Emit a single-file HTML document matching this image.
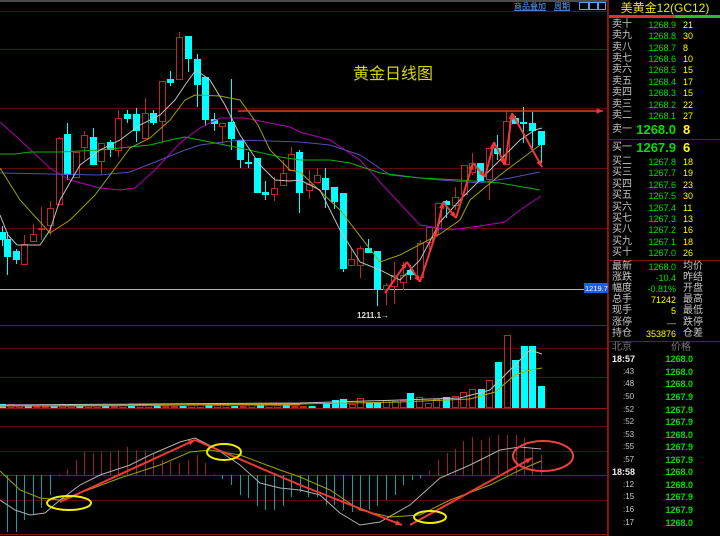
<!DOCTYPE html>
<html><head><meta charset="utf-8"><style>
html,body{margin:0;padding:0;background:#000;width:720px;height:536px;overflow:hidden;}
body{position:relative;font-family:"Liberation Sans","Noto Sans CJK SC",sans-serif;}
#rp{position:absolute;left:608px;top:0;width:112px;height:536px;border-left:1px solid #8a1010;box-sizing:border-box;}
.r{position:absolute;left:0;width:112px;height:12px;font-size:9px;line-height:12px;}
.l{position:absolute;left:3px;color:#c8c8c8;font-size:10px;}
.p{position:absolute;right:45px;color:#00e000;text-align:right;}
.q{position:absolute;left:74px;color:#ffff00;}
.l2{position:absolute;left:74px;color:#c8c8c8;font-size:10px;}
.hr{position:absolute;left:0;width:112px;height:1px;background:#8a1010;}
.t{position:absolute;left:3px;color:#c8c8c8;font-size:8px;}
.tp{position:absolute;right:28px;color:#00e000;font-weight:bold;}
</style></head><body>
<svg id="s" width="608" height="536" style="position:absolute;left:0;top:0" xmlns="http://www.w3.org/2000/svg">
<rect x="0" y="0" width="608" height="536" fill="#000"/>
<line x1="0" y1="1" x2="608" y2="1" stroke="#999" stroke-width="1"/>
<g stroke="#5a0a0a" stroke-width="1">
<line x1="0" y1="11.5" x2="608" y2="11.5"/><line x1="0" y1="49.5" x2="608" y2="49.5"/>
<line x1="0" y1="108.5" x2="608" y2="108.5"/><line x1="0" y1="168.5" x2="608" y2="168.5"/>
<line x1="0" y1="228.5" x2="608" y2="228.5"/>
<line x1="0" y1="348.5" x2="608" y2="348.5"/><line x1="0" y1="377.5" x2="608" y2="377.5"/>
<line x1="0" y1="426.5" x2="608" y2="426.5"/><line x1="0" y1="451.5" x2="608" y2="451.5"/>
<line x1="0" y1="500.5" x2="608" y2="500.5"/>
</g>
<g stroke="#8a1515" stroke-width="1">
<line x1="0" y1="325.5" x2="608" y2="325.5"/><line x1="0" y1="408.5" x2="608" y2="408.5"/>
<line x1="0" y1="475.5" x2="608" y2="475.5"/><line x1="0" y1="534.5" x2="608" y2="534.5"/>
<line x1="607.5" y1="0" x2="607.5" y2="536"/>
</g>
<line x1="0" y1="289.5" x2="608" y2="289.5" stroke="#b8b8b8" stroke-width="1"/>
<text x="514" y="9" font-size="8" fill="#5aa0ff" text-decoration="underline" font-family="Liberation Sans,Noto Sans CJK SC,sans-serif">商品叠加</text>
<text x="554" y="9" font-size="8" fill="#5aa0ff" text-decoration="underline" font-family="Liberation Sans,Noto Sans CJK SC,sans-serif">周期</text>
<rect x="579.5" y="2.5" width="9" height="7" fill="none" stroke="#5aa0ff"/><rect x="589.5" y="2.5" width="8" height="7" fill="none" stroke="#5aa0ff"/><rect x="598.5" y="2.5" width="7" height="7" fill="none" stroke="#5aa0ff"/>
<text x="353" y="79" font-size="16" fill="#d8d800" font-family="Liberation Sans,Noto Sans CJK SC,sans-serif">黄金日线图</text>
<g id="g"></g>
<rect x="584" y="283" width="24" height="10" fill="#1060ff"/>
<text x="585" y="291" font-size="7.5" fill="#fff" font-family="Liberation Sans,sans-serif">1219.7</text>
<text x="357" y="318" font-size="8" fill="#ddd" font-weight="bold" font-family="Liberation Sans,sans-serif">1211.1→</text>
</svg>
<div id="rp">
<div style="position:absolute;left:0;top:0;width:112px;height:16px;text-align:center;color:#e8e800;font-size:12px;line-height:16px;">美黄金12(GC12)</div>
<div style="position:absolute;left:0;top:15px;width:66px;height:3px;background:#e03030"></div>
<div style="position:absolute;left:66px;top:15px;width:46px;height:3px;background:#20c020"></div>
<div class="r" style="top:19px"><span class="l">卖十</span><span class="p">1268.9</span><span class="q">21</span></div>
<div class="r" style="top:30px"><span class="l">卖九</span><span class="p">1268.8</span><span class="q">30</span></div>
<div class="r" style="top:42px"><span class="l">卖八</span><span class="p">1268.7</span><span class="q">8</span></div>
<div class="r" style="top:53px"><span class="l">卖七</span><span class="p">1268.6</span><span class="q">10</span></div>
<div class="r" style="top:64px"><span class="l">卖六</span><span class="p">1268.5</span><span class="q">15</span></div>
<div class="r" style="top:76px"><span class="l">卖五</span><span class="p">1268.4</span><span class="q">17</span></div>
<div class="r" style="top:87px"><span class="l">卖四</span><span class="p">1268.3</span><span class="q">15</span></div>
<div class="r" style="top:99px"><span class="l">卖三</span><span class="p">1268.2</span><span class="q">22</span></div>
<div class="r" style="top:110px"><span class="l">卖二</span><span class="p">1268.1</span><span class="q">27</span></div>
<div class="r" style="top:122px;height:16px;line-height:16px"><span class="l">卖一</span><span class="p" style="font-size:13px;font-weight:bold">1268.0</span><span class="q" style="font-size:13px;font-weight:bold">8</span></div>
<div class="hr" style="top:139px"></div>
<div class="r" style="top:140px;height:16px;line-height:16px"><span class="l">买一</span><span class="p" style="font-size:13px;font-weight:bold">1267.9</span><span class="q" style="font-size:13px;font-weight:bold">6</span></div>
<div class="r" style="top:156px"><span class="l">买二</span><span class="p">1267.8</span><span class="q">18</span></div>
<div class="r" style="top:167px"><span class="l">买三</span><span class="p">1267.7</span><span class="q">19</span></div>
<div class="r" style="top:179px"><span class="l">买四</span><span class="p">1267.6</span><span class="q">23</span></div>
<div class="r" style="top:190px"><span class="l">买五</span><span class="p">1267.5</span><span class="q">30</span></div>
<div class="r" style="top:202px"><span class="l">买六</span><span class="p">1267.4</span><span class="q">11</span></div>
<div class="r" style="top:213px"><span class="l">买七</span><span class="p">1267.3</span><span class="q">13</span></div>
<div class="r" style="top:224px"><span class="l">买八</span><span class="p">1267.2</span><span class="q">16</span></div>
<div class="r" style="top:236px"><span class="l">买九</span><span class="p">1267.1</span><span class="q">18</span></div>
<div class="r" style="top:247px"><span class="l">买十</span><span class="p">1267.0</span><span class="q">26</span></div>
<div class="hr" style="top:260px"></div>
<div class="r" style="top:261px"><span class="l">最新</span><span class="p">1268.0</span><span class="l2">均价</span></div>
<div class="r" style="top:272px"><span class="l">涨跌</span><span class="p">-10.4</span><span class="l2">昨结</span></div>
<div class="r" style="top:283px"><span class="l">幅度</span><span class="p">-0.81%</span><span class="l2">开盘</span></div>
<div class="r" style="top:294px"><span class="l">总手</span><span class="p" style="color:#ffff00">71242</span><span class="l2">最高</span></div>
<div class="r" style="top:305px"><span class="l">现手</span><span class="p" style="color:#ffff00">5</span><span class="l2">最低</span></div>
<div class="r" style="top:317px"><span class="l">涨停</span><span class="p" style="color:#ccc">—</span><span class="l2">跌停</span></div>
<div class="r" style="top:328px"><span class="l">持仓</span><span class="p" style="color:#ffff00">353876</span><span class="l2">仓差</span></div>
<div class="hr" style="top:341px"></div>
<div class="r" style="top:342px"><span class="l" style="color:#777">北京</span><span class="l" style="left:62px;color:#777">价格</span></div>
<div class="r" style="top:353px"><span class="l" style="color:#eee;font-weight:bold;font-size:9px">18:57</span><span class="tp">1268.0</span></div>
<div class="r" style="top:366px"><span class="t" style="left:14px">:43</span><span class="tp">1268.0</span></div>
<div class="r" style="top:378px"><span class="t" style="left:14px">:48</span><span class="tp">1268.0</span></div>
<div class="r" style="top:391px"><span class="t" style="left:14px">:50</span><span class="tp">1267.9</span></div>
<div class="r" style="top:404px"><span class="t" style="left:14px">:52</span><span class="tp">1267.9</span></div>
<div class="r" style="top:416px"><span class="t" style="left:14px">:52</span><span class="tp">1267.9</span></div>
<div class="r" style="top:429px"><span class="t" style="left:14px">:53</span><span class="tp">1268.0</span></div>
<div class="r" style="top:441px"><span class="t" style="left:14px">:55</span><span class="tp">1267.9</span></div>
<div class="r" style="top:454px"><span class="t" style="left:14px">:57</span><span class="tp">1267.9</span></div>
<div class="r" style="top:466px"><span class="l" style="color:#eee;font-weight:bold;font-size:9px">18:58</span><span class="tp">1268.0</span></div>
<div class="r" style="top:479px"><span class="t" style="left:14px">:12</span><span class="tp">1268.0</span></div>
<div class="r" style="top:491px"><span class="t" style="left:14px">:15</span><span class="tp">1267.9</span></div>
<div class="r" style="top:504px"><span class="t" style="left:14px">:16</span><span class="tp">1267.9</span></div>
<div class="r" style="top:517px"><span class="t" style="left:14px">:17</span><span class="tp">1268.0</span></div>
</div>
<script>
var g=document.getElementById("g"),h="";
function pl(p,c,w){return '<polyline fill="none" stroke="'+c+'" stroke-width="'+(w||1)+'" points="'+p.map(function(a){return a.join(",")}).join(" ")+'"/>';}
var C=[[2,232,240,226,246,'c'],[7,239,257,232,275,'c'],[16,251,260,249,264,'c'],[24,244,265,235,265,'r'],[33,234,242,224,242,'r'],[41,228,230,207,240,'r'],[50,208,226,201,235,'r'],[59,138,205,137,205,'r'],[67,134,175,123,180,'c'],[76,152,178,152,178,'r'],[84,135,148,131,160,'r'],[93,137,165,128,165,'c'],[101,143,162,143,175,'r'],[110,142,150,140,157,'c'],[118,118,151,110,157,'r'],[127,114,119,110,123,'c'],[136,114,131,108,142,'c'],[145,113,139,98,139,'r'],[153,113,123,110,125,'c'],[162,81,122,81,143,'r'],[170,79,83,71,86,'c'],[179,37,80,32,80,'r'],[188,36,59,36,72,'c'],[197,59,85,54,107,'c'],[205,77,120,77,126,'c'],[214,119,124,113,131,'c'],[222,123,127,123,145,'r'],[231,122,139,79,150,'c'],[240,140,160,140,168,'c'],[248,162,164,152,168,'c'],[257,158,193,158,193,'c'],[265,192,195,181,200,'c'],[274,188,195,177,201,'r'],[283,173,186,160,186,'r'],[291,154,171,147,171,'r'],[299,152,193,150,213,'c'],[309,184,191,170,199,'r'],[317,175,183,168,183,'r'],[325,178,190,168,208,'c'],[334,187,202,187,209,'c'],[343,193,269,193,272,'c'],[351,259,266,249,266,'r'],[360,248,266,246,278,'r'],[368,248,253,239,253,'c'],[377,251,290,251,306,'c'],[386,285,290,283,305,'r'],[394,275,287,262,304,'r'],[403,275,283,262,290,'r'],[410,270,275,265,280,'c'],[420,243,278,240,278,'r'],[429,227,243,227,250,'r'],[438,203,229,203,235,'r'],[446,201,205,200,218,'c'],[455,197,206,187,210,'r'],[464,165,195,165,195,'r'],[472,163,173,153,175,'r'],[480,163,181,163,181,'c'],[489,148,180,148,200,'r'],[497,148,154,135,160,'c'],[506,121,165,111,165,'r'],[515,118,124,116,124,'c'],[523,122,124,107,143,'c'],[532,123,131,112,148,'c'],[541,131,145,131,163,'c']];
C.forEach(function(c){var x=c[0],col=c[5]=='c'?'#00ffff':'#b82a22';
h+='<line x1="'+(x+.5)+'" y1="'+c[3]+'" x2="'+(x+.5)+'" y2="'+c[4]+'" stroke="'+col+'"/>';
if(c[5]=='c')h+='<rect x="'+(x-3)+'" y="'+c[1]+'" width="7" height="'+Math.max(1,c[2]-c[1])+'" fill="#00ffff"/>';
else h+='<rect x="'+(x-2.5)+'" y="'+(c[1]+.5)+'" width="6" height="'+Math.max(1,c[2]-c[1]-1)+'" fill="#000" stroke="#b82a22"/>';});
h+=pl([[0,122],[20,140],[50,168],[70,180],[100,188],[120,190],[135,188],[155,170],[180,143],[200,128],[220,118],[245,118],[265,122],[290,127],[300,132],[330,140],[360,160],[390,193],[420,225],[450,230],[480,226],[505,222],[520,210],[541,196]],'#b000b0');
h+=pl([[0,173],[50,174],[100,175],[130,172],[160,160],[185,150],[200,145],[240,140],[300,142],[330,145],[360,155],[390,175],[440,180],[480,183],[510,178],[540,172]],'#5050b0');
h+=pl([[0,154],[15,154],[30,152],[60,152],[100,150],[150,145],[170,140],[185,137],[200,140],[240,148],[280,157],[300,160],[330,160],[350,163],[380,173],[420,178],[460,180],[500,183],[540,190]],'#10b010');
h+=pl([[0,168],[20,200],[50,233],[70,220],[95,195],[110,175],[130,148],[150,138],[170,120],[185,100],[195,95],[220,96],[240,100],[258,125],[270,150],[290,170],[300,172],[340,210],[380,262],[400,255],[440,234],[460,220],[470,200],[500,175],[520,160],[540,145]],'#a0a000');
h+=pl([[0,215],[8,235],[17,245],[40,245],[50,230],[60,200],[80,165],[100,150],[120,140],[140,125],[160,115],[175,100],[185,85],[196,70],[210,80],[225,105],[240,135],[260,165],[275,180],[290,181],[300,180],[320,190],[340,230],[360,262],[380,270],[400,280],[420,260],[440,222],[460,200],[480,180],[500,160],[520,140],[535,130],[542,128]],'#c0c0c0');
function arr(x1,y1,x2,y2,c,w){var a=Math.atan2(y2-y1,x2-x1),L=7;
return '<line x1="'+x1+'" y1="'+y1+'" x2="'+x2+'" y2="'+y2+'" stroke="'+c+'" stroke-width="'+w+'"/><polygon fill="'+c+'" points="'+x2+','+y2+' '+(x2-L*Math.cos(a-0.4))+','+(y2-L*Math.sin(a-0.4))+' '+(x2-L*Math.cos(a+0.4))+','+(y2-L*Math.sin(a+0.4))+'"/>';}
h+=arr(238,111,603,111,'#e83838',1.5);
var Z=[[385,293],[407,262],[420,282],[437,230],[443,202],[456,218],[473,163],[485,177],[494,142],[505,165],[512,113],[542,167]];
for(var i=0;i<Z.length-1;i++)h+=arr(Z[i][0],Z[i][1],Z[i+1][0],Z[i+1][1],'#f03838',2);
var V=[[410,393,'c'],[419,397,'r'],[428,403,'r'],[436,399,'r'],[446,397,'c'],[455,396,'r'],[463,392,'r'],[472,389,'r'],[481,389,'c'],[489,380,'r'],[498,362,'c'],[507,335,'r'],[515,360,'c'],[524,346,'c'],[532,346,'c'],[541,386,'c'],[326,403,'c'],[335,400,'c'],[343,399,'c'],[352,404,'r'],[360,398,'r'],[369,403,'c'],[377,402,'c'],[386,400,'r'],[395,401,'r'],[403,400,'r']];
for(var x=2;x<320;x+=8.6){var hh=1+((Math.round(x)*7)%3);var cy=((Math.floor(x/8.6))%3==0);V.push([x,407-hh,cy?'c':'r']);}
V.forEach(function(v){var t=v[1];if(v[2]=='c')h+='<rect x="'+(v[0]-3)+'" y="'+t+'" width="7" height="'+(408-t)+'" fill="#00ffff"/>';else h+='<rect x="'+(v[0]-2.5)+'" y="'+(t+.5)+'" width="6" height="'+(407-t)+'" fill="#000" stroke="#b82a22"/>';});
h+=pl([[0,405],[300,403],[400,400],[460,398],[490,390],[510,370],[530,350],[542,354]],'#c0c0c0');
h+=pl([[0,406],[300,404],[400,402],[470,399],[495,392],[515,375],[530,370],[542,368]],'#b0b000');
h+=pl([[0,406],[80,406],[200,405],[300,405]],'#e07020');
var M=[[7,532],[16,532],[24,520],[33,515],[41,508],[50,495],[59,474],[67,469],[76,460],[84,452],[93,453],[101,452],[110,452],[118,450],[127,447],[136,450],[145,450],[153,454],[162,460],[170,462],[179,463],[188,460],[197,455],[205,463],[214,474],[222,479],[231,485],[240,495],[248,498],[257,506],[265,510],[274,510],[283,506],[291,497],[300,492],[308,497],[317,497],[326,505],[334,505],[343,510],[352,512],[360,508],[369,510],[377,506],[386,500],[395,495],[403,485],[412,480],[420,478],[429,471],[438,460],[447,453],[455,449],[463,441],[472,437],[481,440],[489,437],[498,435],[507,435],[516,435],[524,438],[532,448],[541,455]];
M.forEach(function(m){var c=m[1]>475?'#10a0a8':'#a02020';h+='<line x1="'+(m[0]+.5)+'" y1="475" x2="'+(m[0]+.5)+'" y2="'+m[1]+'" stroke="'+c+'" stroke-width="1"/>';});
h+=pl([[0,471],[20,490],[40,498],[60,500],[80,493],[120,478],[160,465],[190,452],[210,450],[240,455],[280,470],[300,477],[330,490],[360,510],[390,517],[420,515],[450,500],[490,485],[520,470],[541,461]],'#a0a000');
h+=pl([[0,500],[15,510],[30,515],[45,513],[60,500],[80,485],[100,475],[130,465],[150,455],[180,442],[195,438],[215,448],[240,465],[260,483],[280,488],[300,490],[320,495],[340,513],[360,525],[380,522],[410,505],[440,478],[470,465],[500,450],[520,447],[541,449]],'#b0b0b0');
h+=arr(60,502,195,440,'#f03838',2);
h+='<line x1="195" y1="440" x2="300" y2="485" stroke="#f03838" stroke-width="2"/>';
h+=arr(300,485,402,525,'#f03838',2);
h+=arr(410,525,532,458,'#f03838',2);
h+='<ellipse cx="69" cy="503" rx="22" ry="7" fill="none" stroke="#f0f000" stroke-width="2"/>';
h+='<ellipse cx="224" cy="452" rx="17" ry="8" fill="none" stroke="#f0f000" stroke-width="2"/>';
h+='<ellipse cx="430" cy="517" rx="16" ry="6" fill="none" stroke="#f0f000" stroke-width="2"/>';
h+='<ellipse cx="543" cy="456" rx="30" ry="15" fill="none" stroke="#f04040" stroke-width="2"/>';
g.innerHTML=h;
</script>
</body></html>
